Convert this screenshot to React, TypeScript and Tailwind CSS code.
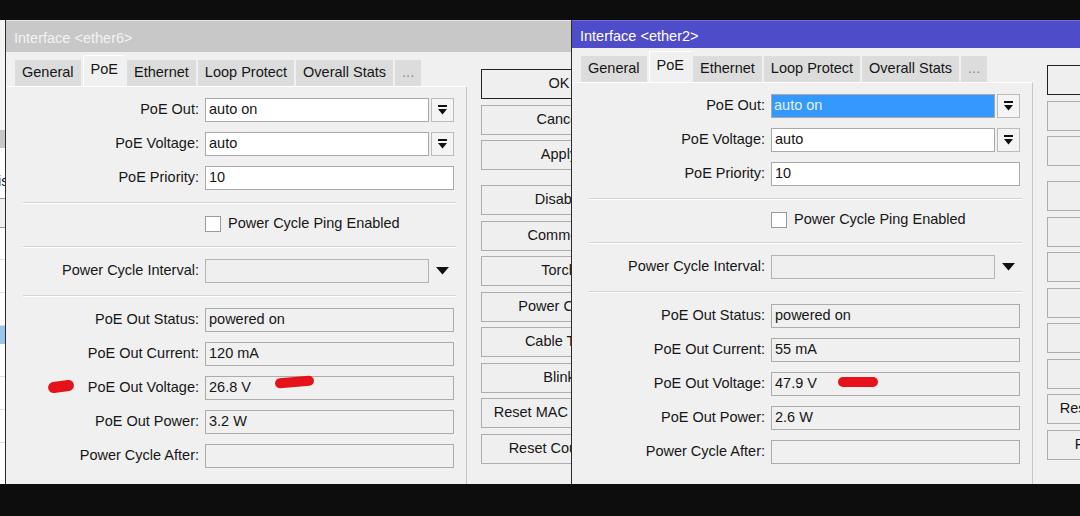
import React from 'react';

type WinProps = {
  left: string;
  title: string;
  titleClass: string;
  titleH: string;
  highlight?: boolean;
  status: string;
  current: string;
  voltage: string;
  power: string;
};

const tabs = ['General', 'PoE', 'Ethernet', 'Loop Protect', 'Overall Stats', '...'];

const buttons = [
  'OK',
  'Cancel',
  'Apply',
  '',
  'Disable',
  'Comment',
  'Torch',
  'Power Cycle',
  'Cable Test',
  'Blink',
  'Reset MAC Address',
  'Reset Counters',
];

function DropButton() {
  return (
    <div className="w-[23px] h-[24px] border border-[#bcbcbc] bg-[#f4f4f4] flex items-center justify-center">
      <svg width="9" height="10" viewBox="0 0 9 10">
        <rect x="0" y="0" width="9" height="2" fill="#111" />
        <path d="M0 4 H9 L4.5 9.5 Z" fill="#111" />
      </svg>
    </div>
  );
}

function Row({ label, children, className = '' }: { label: string; children: React.ReactNode; className?: string }) {
  return (
    <div className={`flex items-center h-[24px] ${className}`}>
      <div className="w-[193px] text-right whitespace-nowrap">{label}</div>
      <div className="ml-[6px] flex items-center gap-[2px]">{children}</div>
    </div>
  );
}

function Separator({ className = '' }: { className?: string }) {
  return <div className={`ml-[17px] w-[433px] border-t border-[#d4d4d4] border-b border-b-white ${className}`} />;
}

function ReadOnly({ value }: { value: string }) {
  return (
    <div className="w-[249px] h-[24px] border border-[#acacac] bg-[#f0f0f0] pl-[3px] flex items-center whitespace-nowrap">
      {value}
    </div>
  );
}

function Window({ left, title, titleClass, titleH, highlight, status, current, voltage, power }: WinProps) {
  return (
    <div className={`absolute top-[20px] ${left} w-[650px] h-[464px] bg-[#f0f0f0] border-l border-[#2c2c2c] flex flex-col`}>
      <div className={`${titleH} ${titleClass} pl-[8px] pt-[5px] flex items-center shrink-0`}>{title}</div>
      <div className="flex flex-1">
        <div className="w-[461px] flex flex-col">
          <div className="h-[34px] flex items-end pl-[9px] gap-[2px] shrink-0">
            {tabs.map((t) =>
              t === 'PoE' ? (
                <div key={t} className="h-[31px] px-[7px] pb-[2px] bg-[#f0f0f0] border-t border-l border-white flex items-center">
                  {t}
                </div>
              ) : (
                <div
                  key={t}
                  className={`h-[26px] px-[7px] bg-[#dcdcdc] flex items-center ${t === '...' ? 'text-[#8a8a8a]' : ''}`}
                >
                  {t}
                </div>
              )
            )}
          </div>
          <div className="flex-1 border-t border-white border-r border-r-[#c6c6c6] pt-[11px] flex flex-col">
            <Row label="PoE Out:">
              <div
                className={`w-[224px] h-[24px] border border-[#a9a9a9] flex items-center ${
                  highlight ? 'bg-[#3399ff] text-[#e8f2ff] pl-[2px]' : 'bg-white pl-[3px]'
                }`}
              >
                auto on
              </div>
              <DropButton />
            </Row>
            <Row label="PoE Voltage:" className="mt-[10px]">
              <div className="w-[224px] h-[24px] border border-[#a9a9a9] bg-white pl-[3px] flex items-center">auto</div>
              <DropButton />
            </Row>
            <Row label="PoE Priority:" className="mt-[10px]">
              <div className="w-[249px] h-[24px] border border-[#a9a9a9] bg-white pl-[3px] flex items-center">10</div>
            </Row>
            <Separator className="mt-[12px]" />
            <Row label="" className="mt-[8px]">
              <div className="w-[16px] h-[16px] border border-[#9a9a9a] bg-white" />
              <span className="ml-[5px] whitespace-nowrap">Power Cycle Ping Enabled</span>
            </Row>
            <Separator className="mt-[10px]" />
            <Row label="Power Cycle Interval:" className="mt-[11px]">
              <div className="w-[224px] h-[24px] border border-[#b4b4b4] bg-[#efefef]" />
              <div className="w-[23px] flex justify-center">
                <svg width="13" height="8" viewBox="0 0 13 8">
                  <path d="M0 0 H13 L6.5 7.5 Z" fill="#111" />
                </svg>
              </div>
            </Row>
            <Separator className="mt-[12px]" />
            <Row label="PoE Out Status:" className="mt-[11px]">
              <ReadOnly value={status} />
            </Row>
            <Row label="PoE Out Current:" className="mt-[10px]">
              <ReadOnly value={current} />
            </Row>
            <Row label="PoE Out Voltage:" className="mt-[10px]">
              <ReadOnly value={voltage} />
            </Row>
            <Row label="PoE Out Power:" className="mt-[10px]">
              <ReadOnly value={power} />
            </Row>
            <Row label="Power Cycle After:" className="mt-[10px]">
              <ReadOnly value="" />
            </Row>
          </div>
        </div>
        <div className="pl-[14px] pt-[17px] flex flex-col gap-[5.5px]">
          {buttons.map((b, i) =>
            b === '' ? (
              <div key={i} className="h-[4px]" />
            ) : (
              <div
                key={b}
                className={`w-[156px] h-[30px] bg-[#efefef] flex items-center justify-center whitespace-nowrap border ${
                  b === 'OK' ? 'border-[#222]' : 'border-[#adadad]'
                }`}
              >
                {b}
              </div>
            )
          )}
        </div>
      </div>
    </div>
  );
}

export default function App() {
  return (
    <div className="relative w-[1080px] h-[516px] overflow-hidden bg-[#0d0d0d] text-[14.5px] text-[#161616] font-['Liberation_Sans',Arial,sans-serif]">
      {/* window behind, only its edge shows */}
      <div className="absolute left-0 top-[20px] w-[5px] h-[464px] bg-white flex flex-col overflow-hidden">
        <div className="h-[110px] bg-[#f4f4f4]" />
        <div className="h-[18px] bg-[#c6c6c6]" />
        <div className="h-[24px]" />
        <div className="h-[18px] flex items-center -ml-[2px] leading-none">is</div>
        <div className="h-[8px]" />
        <div className="h-[30px] border-y border-[#999] bg-[#f0f0f0]" />
        <div className="h-[32px] border-b border-[#ddd]" />
        <div className="h-[33px] border-b border-[#ddd]" />
        <div className="h-[33px] border-b border-[#ddd]" />
        <div className="h-[18px] bg-[#9cc3ea]" />
        <div className="h-[33px] border-b border-[#ddd]" />
        <div className="h-[33px] border-b border-[#ddd]" />
        <div className="h-[33px] border-b border-[#ddd]" />
      </div>

      <Window
        left="left-[5px]"
        title="Interface <ether6>"
        titleClass="bg-[#c8c8c8] text-[#f3f3f3] border-t border-[#e6e6e6]"
        titleH="h-[32px]"
        status="powered on"
        current="120 mA"
        voltage="26.8 V"
        power="3.2 W"
      />
      <Window
        left="left-[571px]"
        title="Interface <ether2>"
        titleClass="bg-[#4f4cc9] text-white border-t border-[#6f6cdc]"
        titleH="h-[28px]"
        highlight
        status="powered on"
        current="55 mA"
        voltage="47.9 V"
        power="2.6 W"
      />

      {/* red marker annotations */}
      <div className="absolute left-[48px] top-[381px] w-[26px] h-[11px] rounded-full bg-[#e5121a] -rotate-[8deg]" />
      <div className="absolute left-[275px] top-[377px] w-[39px] h-[10px] rounded-full bg-[#e5121a] -rotate-[5deg]" />
      <div className="absolute left-[838px] top-[377px] w-[40px] h-[10px] rounded-full bg-[#e5121a]" />
    </div>
  );
}
